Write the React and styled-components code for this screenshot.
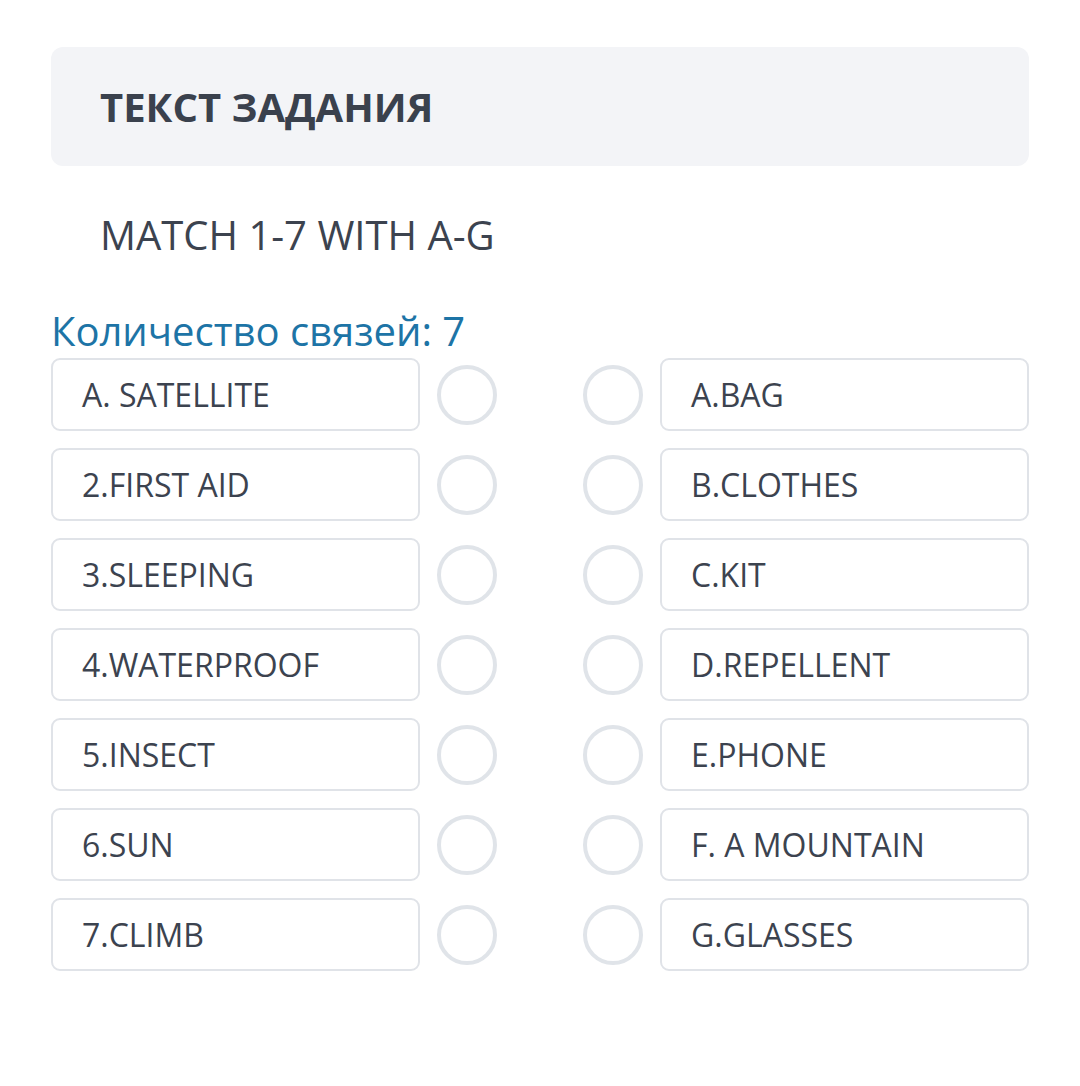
import React from "react"
import styled, { createGlobalStyle } from "styled-components"

const GlobalStyle = createGlobalStyle`
    body {
        margin: 0;
        background: #ffffff;
        font-family: "Open Sans", "Noto Sans", sans-serif;
    }
`

const Page = styled.div`
    width: 1080px;
    padding: 47px 51px 0;
    box-sizing: border-box;
`

const Header = styled.div`
    background: #f3f4f7;
    border-radius: 12px;
    height: 119px;
    padding: 0 49px;
    display: flex;
    align-items: center;
`

const HeaderTitle = styled.h2`
    margin: 0;
    font-size: 40px;
    font-weight: 700;
    color: #3a414d;
`

const Task = styled.p`
    margin: 0;
    padding: 42px 49px 0;
    font-size: 40px;
    line-height: 54px;
    color: #3c434f;
`

const Count = styled.div`
    margin-top: 43px;
    font-size: 40px;
    line-height: 52px;
    color: #1d74a6;
`

const Rows = styled.div`
    display: flex;
    flex-direction: column;
    gap: 17px;
    margin-top: 1px;
`

const Row = styled.div`
    display: flex;
    align-items: center;
    justify-content: space-between;
`

const Side = styled.div`
    display: flex;
    align-items: center;
    gap: 17px;
`

const Item = styled.div`
    width: 369px;
    height: 73px;
    box-sizing: border-box;
    border: 2px solid #e0e3e8;
    border-radius: 9px;
    padding: 0 29px;
    display: flex;
    align-items: center;
    font-size: 32px;
    color: #3c434f;
`

const Dot = styled.span`
    width: 60px;
    height: 60px;
    box-sizing: border-box;
    border: 4px solid #e0e4e9;
    border-radius: 50%;
    flex: none;
`

const left = ["A. SATELLITE", "2.FIRST AID", "3.SLEEPING", "4.WATERPROOF", "5.INSECT", "6.SUN", "7.CLIMB"]
const right = ["A.BAG", "B.CLOTHES", "C.KIT", "D.REPELLENT", "E.PHONE", "F. A MOUNTAIN", "G.GLASSES"]

function App() {
    return (
        <Page>
            <GlobalStyle />
            <Header>
                <HeaderTitle>ТЕКСТ ЗАДАНИЯ</HeaderTitle>
            </Header>

            <Task>MATCH 1-7 WITH A-G</Task>

            <Count>Количество связей: 7</Count>

            <Rows>
                {left.map((text, i) => (
                    <Row key={text}>
                        <Side>
                            <Item>{text}</Item>
                            <Dot />
                        </Side>
                        <Side>
                            <Dot />
                            <Item>{right[i]}</Item>
                        </Side>
                    </Row>
                ))}
            </Rows>
        </Page>
    )
}

export default App
